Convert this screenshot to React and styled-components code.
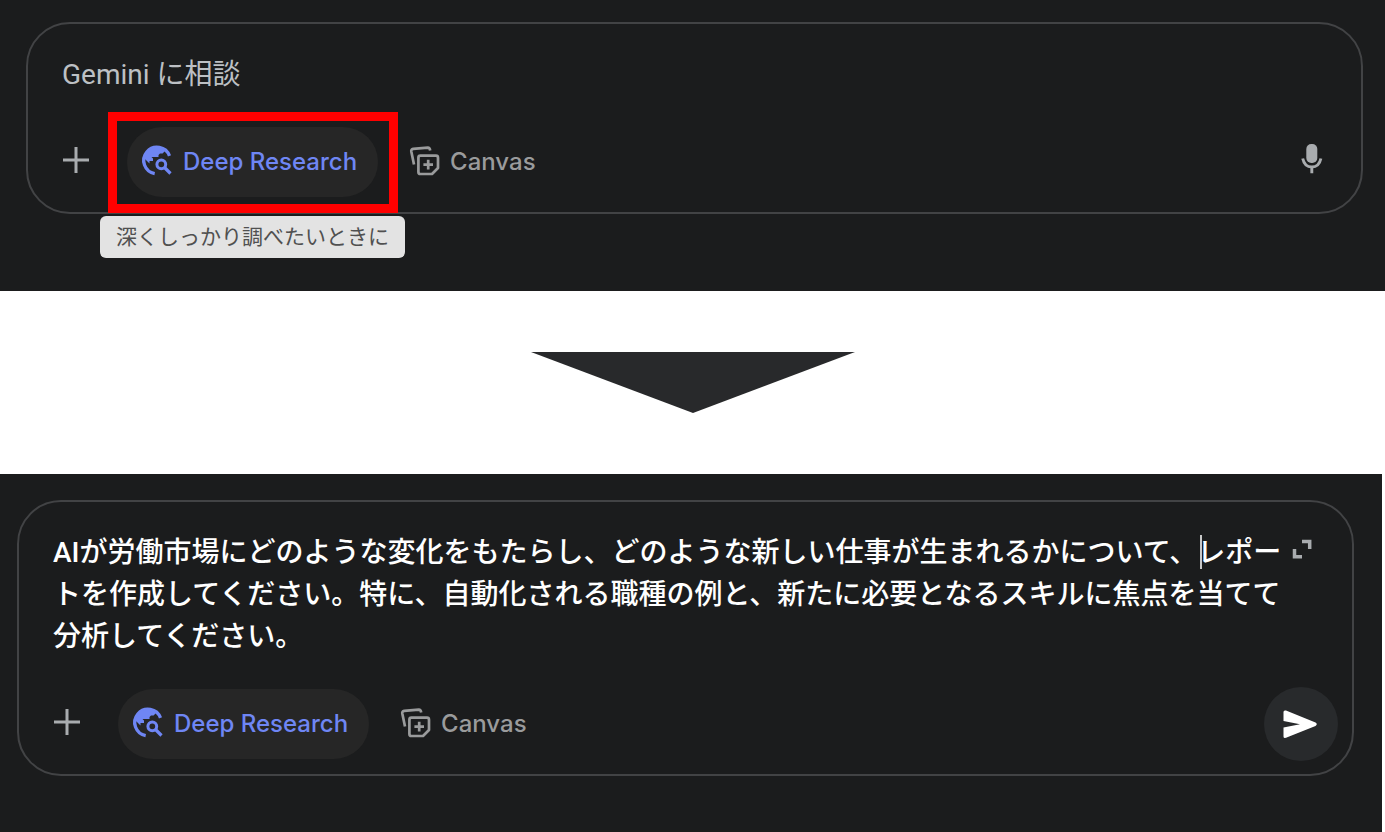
import React, { useState } from "react";
import styled, { createGlobalStyle } from "styled-components";

const PROMPT =
	"AIが労働市場にどのような変化をもたらし、どのような新しい仕事が生まれるかについて、レポートを作成してください。特に、自動化される職種の例と、新たに必要となるスキルに焦点を当てて分析してください。";

const PlusIcon = () => (
	<svg width="28" height="28" viewBox="0 0 28 28" aria-hidden="true">
		<path d="M14 1v26M1 14h26" stroke="currentColor" strokeWidth="3" />
	</svg>
);

const ResearchIcon = () => (
	<svg width="36" height="36" viewBox="0 0 36 36" fill="none" aria-hidden="true">
		<path
			d="M29.500 12.900A13.300 13.300 0 1 0 14.700 30.600"
			stroke="currentColor"
			strokeWidth="3.300"
		/>
		<path
			d="M3.500 14.500L9.500 20.500V18H13V15.500L11.500 14H18.500V12L20 10.500H22.500L25.500 7.500L17 3L8 7Z"
			fill="currentColor"
		/>
		<circle cx="21.300" cy="21.300" r="4.400" stroke="currentColor" strokeWidth="3" />
		<path d="M24.500 24.500L30.500 30.500" stroke="currentColor" strokeWidth="3.200" />
	</svg>
);

const CanvasIcon = () => (
	<svg width="36" height="36" viewBox="0 0 36 36" fill="none" aria-hidden="true">
		<g stroke="currentColor" strokeWidth="2.700">
			<path d="M7 21.500L4.300 8.500Q3.900 6.300 6.200 5.900L20.800 4.600Q22.700 4.500 23.200 7.500" />
			<path
				d="M13.400 12.700H29Q31 12.700 31 14.700V25L25 31H13.400Q11.400 31 11.400 29V14.700Q11.400 12.700 13.400 12.700Z"
				strokeLinejoin="round"
			/>
			<path d="M21.200 16.800V26.400M16.400 21.600H26" />
		</g>
	</svg>
);

const MicIcon = () => (
	<svg width="36" height="36" viewBox="0 0 36 36" fill="none" aria-hidden="true">
		<rect x="12.300" y="2" width="11" height="19" rx="5" fill="currentColor" />
		<path
			d="M8.700 16.500Q10.500 25 17.800 25T26.900 16.500M17.800 25v6.200"
			stroke="currentColor"
			strokeWidth="2.900"
		/>
	</svg>
);

const ExpandIcon = () => (
	<svg width="20" height="20" viewBox="0 0 20 20" fill="none" aria-hidden="true">
		<path
			d="M10 2.500H17.700V10M2.500 10V17.700H10"
			stroke="currentColor"
			strokeWidth="3.500"
		/>
	</svg>
);

const SendIcon = () => (
	<svg width="36" height="36" viewBox="0 0 36 36" aria-hidden="true">
		<path
			d="M0.500 6Q0.500 4 3 4.600L32.500 16.500Q35 18.200 32.500 19.900L3 31.800Q0.500 32.400 0.500 30.400V21.500L17 18.200L0.500 14.900Z"
			fill="currentColor"
		/>
	</svg>
);

const Tools = ({ children }) => (
	<>
		<PlainButton type="button" aria-label="追加">
			<PlusIcon />
		</PlainButton>
		<PillHolder>
			<ToolButton type="button" $active>
				<ResearchIcon />
				Deep Research
			</ToolButton>
			{children}
		</PillHolder>
		<ToolButton type="button">
			<CanvasIcon />
			Canvas
		</ToolButton>
	</>
);

const App = () => {
	const [question, setQuestion] = useState("");
	const [prompt, setPrompt] = useState(PROMPT);

	return (
		<>
			<GlobalStyle />
			<main>
				<FirstPanel>
					<Card>
						<PromptRow>
							<PromptInput
								aria-label="Gemini に相談"
								placeholder="Gemini に相談"
								value={question}
								onChange={(e) => setQuestion(e.target.value)}
							/>
						</PromptRow>
						<Toolbar>
							<Tools>
								<Highlight />
								<Tooltip role="tooltip">深くしっかり調べたいときに</Tooltip>
							</Tools>
							<MicButton type="button" aria-label="マイク">
								<MicIcon />
							</MicButton>
						</Toolbar>
					</Card>
				</FirstPanel>

				<Divider>
					<Arrow viewBox="0 0 324 61" aria-hidden="true">
						<path d="M0 0H324L162 61Z" fill="#28292b" />
					</Arrow>
				</Divider>

				<SecondPanel>
					<Card>
						<PromptRow>
							<PromptArea
								aria-label="プロンプト"
								rows={3}
								spellCheck={false}
								value={prompt}
								onChange={(e) => setPrompt(e.target.value)}
							/>
							<Caret />
							<ExpandButton type="button" aria-label="全画面">
								<ExpandIcon />
							</ExpandButton>
						</PromptRow>
						<Toolbar>
							<Tools />
							<SendButton type="button" aria-label="送信">
								<SendIcon />
							</SendButton>
						</Toolbar>
					</Card>
				</SecondPanel>
			</main>
		</>
	);
};

const GlobalStyle = createGlobalStyle`
	* {
		box-sizing: border-box;
	}
	body {
		margin: 0;
		background: #ffffff;
		font-family: Roboto, "Noto Sans CJK JP", sans-serif;
	}
	button, input, textarea {
		margin: 0;
		padding: 0;
		border: 0;
		outline: 0;
		background: none;
		font-family: inherit;
	}
	svg {
		display: block;
		flex-shrink: 0;
	}
`;

const Panel = styled.section`
	background: #1b1c1d;
`;

const FirstPanel = styled(Panel)`
	padding: 22px 22px 77px 26px;
`;

const SecondPanel = styled(Panel)`
	margin-right: 3px;
	padding: 26px 28px 56px 17px;
`;

const Card = styled.div`
	padding: 30px 0 13px 34px;
	border: 2px solid #424345;
	border-radius: 44px;
`;

const PromptRow = styled.div`
	position: relative;
	display: flex;
	align-items: flex-start;
	padding-right: 34px;
	margin-bottom: 29px;
`;

const PromptInput = styled.input`
	flex: 1;
	height: 42px;
	font-size: 28px;
	line-height: 42px;
	color: #ffffff;
	&::placeholder {
		color: #bdc0c4;
		opacity: 1;
	}
`;

const PromptArea = styled.textarea`
	flex: 1;
	resize: none;
	overflow: hidden;
	font-size: 28px;
	font-weight: 500;
	line-height: 42px;
	color: #ffffff;
`;

const Caret = styled.span`
	position: absolute;
	left: 1147px;
	top: 3px;
	width: 2px;
	height: 34px;
	background: #c8c8c8;
`;

const Toolbar = styled.div`
	display: flex;
	align-items: center;
	height: 74px;
	padding-right: 14px;
`;

const PlainButton = styled.button`
	display: flex;
	align-items: center;
	justify-content: center;
	color: #a9acaf;
	padding-bottom: 4px;
`;

const ExpandButton = styled(PlainButton)`
	width: 32px;
	height: 34px;
	padding-bottom: 0;
`;

const MicButton = styled(PlainButton)`
	width: 70px;
	height: 70px;
	margin-left: auto;
`;

const SendButton = styled.button`
	display: flex;
	align-items: center;
	justify-content: center;
	width: 74px;
	height: 74px;
	margin-left: auto;
	border-radius: 50%;
	background: #282a2c;
	color: #ffffff;
`;

const PillHolder = styled.div`
	position: relative;
	margin: 0 16px 0 37px;
`;

const ToolButton = styled.button`
	display: flex;
	align-items: center;
	gap: 7px;
	height: 70px;
	padding: 0 21px 2px 13px;
	border-radius: 35px;
	background: ${({ $active }) => ($active ? "#262626" : "transparent")};
	color: ${({ $active }) => ($active ? "#6f86f4" : "#9a9b9c")};
	font-family: Inter, sans-serif;
	font-size: 24px;
	font-weight: 500;
	white-space: nowrap;
`;

const Highlight = styled.div`
	position: absolute;
	inset: -15px -20px -16px -19px;
	border: 9px solid #ff0000;
	pointer-events: none;
`;

const Tooltip = styled.div`
	position: absolute;
	left: -27px;
	top: 89px;
	height: 42px;
	padding: 0 16px;
	border-radius: 6px;
	background: #e3e3e3;
	color: #505050;
	font-size: 21px;
	line-height: 42px;
	white-space: nowrap;
`;

const Divider = styled.div`
	display: flex;
	justify-content: center;
	padding: 61px 0;
`;

const Arrow = styled.svg`
	width: 324px;
	height: 61px;
`;

export default App;
